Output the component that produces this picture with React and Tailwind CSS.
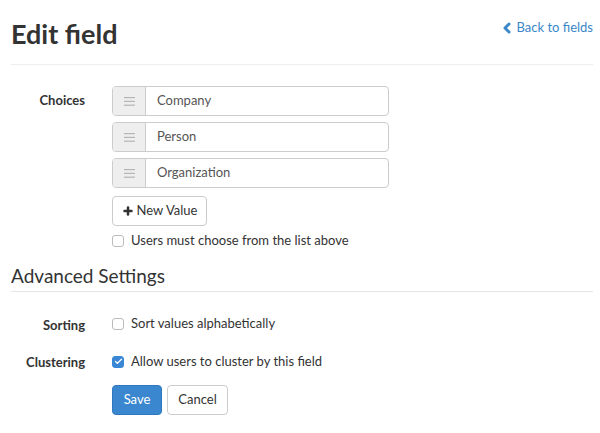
import React, { useState } from "react";
import { ChevronLeft, Plus, Check } from "lucide-react";

const font = { fontFamily: "Lato, 'Liberation Sans', sans-serif" };

const DragIcon = () => (
  <svg width="11" height="9" viewBox="0 0 11 9" className="text-[#b5b5b5]">
    <rect x="0" y="0" width="11" height="1.2" fill="currentColor" />
    <rect x="0" y="3.8" width="11" height="1.2" fill="currentColor" />
    <rect x="0" y="7.6" width="11" height="1.2" fill="currentColor" />
  </svg>
);

const Checkbox = ({ checked, onChange }) => (
  <button
    onClick={onChange}
    className={`w-[12px] h-[12px] rounded-[3px] border flex items-center justify-center shrink-0 ${
      checked ? "bg-[#3a87d6] border-[#3a87d6]" : "bg-white border-[#bbb]"
    }`}
  >
    {checked && <Check size={9} strokeWidth={3.5} className="text-white" />}
  </button>
);

const FormRow = ({ label, children, top = "pt-[5px]" }) => (
  <div className="flex">
    <div className={`w-[74px] text-right text-[13px] font-bold text-[#333] ${top}`}>
      {label}
    </div>
    <div className="ml-[27px] flex-1">{children}</div>
  </div>
);

export default function App() {
  const [choices] = useState(["Company", "Person", "Organization"]);
  const [mustChoose, setMustChoose] = useState(false);
  const [sortAlpha, setSortAlpha] = useState(false);
  const [cluster, setCluster] = useState(true);

  return (
    <div className="w-[600px] h-[433px] bg-white pl-[11px] pr-[7px] text-[#333] overflow-hidden" style={font}>
      {/* Header */}
      <div className="flex justify-between items-start pt-[17px] pb-[13px] border-b border-[#eee]">
        <h1 className="text-[27px] font-bold leading-[34px] text-[#333]">Edit field</h1>
        <a href="#" className="flex items-center text-[13px] text-[#3a87c9] mt-[1px]">
          <ChevronLeft size={16} strokeWidth={4.5} className="mr-[1px] -ml-[2px]" />
          Back to fields
        </a>
      </div>

      <div className="pt-[21px]">
        <FormRow label="Choices" top="pt-[5px]">
          <div className="flex flex-col gap-[6px]">
            {choices.map((c) => (
              <div key={c} className="flex w-[277px] h-[30px] border border-[#ccc] rounded-[4px] overflow-hidden">
                <div className="w-[33px] bg-[#eee] border-r border-[#ccc] flex items-center justify-center">
                  <DragIcon />
                </div>
                <div className="flex-1 flex items-center pl-[11px] text-[13px] text-[#555]">{c}</div>
              </div>
            ))}
          </div>
          <button className="mt-[8px] h-[30px] w-[95px] border border-[#ccc] rounded-[4px] bg-white flex items-center justify-center text-[13px] text-[#333]">
            <Plus size={12} strokeWidth={5} className="mr-[3px]" />
            New Value
          </button>
          <label className="flex items-center mt-[5px] gap-[7px] text-[13px] text-[#333]">
            <Checkbox checked={mustChoose} onChange={() => setMustChoose(!mustChoose)} />
            Users must choose from the list above
          </label>
        </FormRow>
      </div>

      <div className="mt-[13px] pb-[3px] border-b border-[#e5e5e5]">
        <h2 className="text-[19px] font-normal leading-[24px] text-[#333]">Advanced Settings</h2>
      </div>

      <div className="pt-[24px]">
        <FormRow label="Sorting" top="pt-0">
          <label className="flex items-center gap-[7px] text-[13px] text-[#333] h-[17px]">
            <Checkbox checked={sortAlpha} onChange={() => setSortAlpha(!sortAlpha)} />
            Sort values alphabetically
          </label>
        </FormRow>
        <div className="mt-[18px]">
          <FormRow label="Clustering" top="pt-0">
            <label className="flex items-center gap-[7px] text-[13px] text-[#333] h-[17px]">
              <Checkbox checked={cluster} onChange={() => setCluster(!cluster)} />
              Allow users to cluster by this field
            </label>
            <div className="flex gap-[5px] mt-[15px]">
              <button className="h-[30px] w-[50px] rounded-[4px] bg-[#3a87d0] border border-[#2f78bd] text-white text-[13px]">
                Save
              </button>
              <button className="h-[30px] w-[61px] rounded-[4px] bg-white border border-[#ccc] text-[#333] text-[13px]">
                Cancel
              </button>
            </div>
          </FormRow>
        </div>
      </div>
    </div>
  );
}
